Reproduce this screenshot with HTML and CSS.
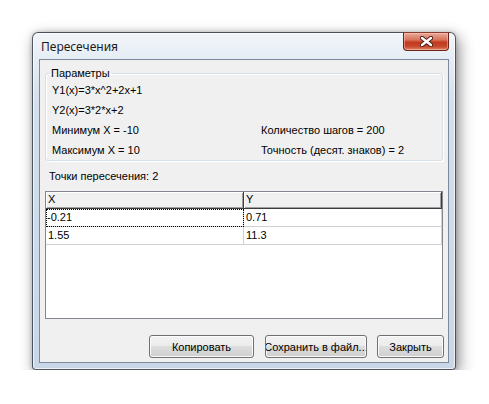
FILE: index.html
```html
<!DOCTYPE html>
<html lang="ru">
<head>
<meta charset="utf-8">
<title>Пересечения</title>
<link rel="stylesheet" href="styles.css">
</head>
<body>
<div class="stage">
  <div class="window">
    <div class="titlebar">
      <span class="title">Пересечения</span>
      <div class="close">
        <svg width="13" height="11" viewBox="0 0 13 11">
          <path d="M2 2 L11 9 M11 2 L2 9" stroke="#4a1a12" stroke-width="4.2" stroke-linecap="round" fill="none"/>
          <path d="M2 2 L11 9 M11 2 L2 9" stroke="#ffffff" stroke-width="2.4" stroke-linecap="round" fill="none"/>
        </svg>
      </div>
    </div>
    <div class="client">
      <fieldset class="params">
        <legend>Параметры</legend>
        <div class="pgrid">
          <span>Y1(x)=3*x^2+2x+1</span><span></span>
          <span>Y2(x)=3*2*x+2</span><span></span>
          <span>Минимум X = -10</span><span>Количество шагов = 200</span>
          <span>Максимум X = 10</span><span>Точность (десят. знаков) = 2</span>
        </div>
      </fieldset>
      <div class="count">Точки пересечения: 2</div>
      <div class="list">
        <div class="hdr">X</div>
        <div class="hdr">Y</div>
        <div class="cell focus">-0.21</div>
        <div class="cell">0.71</div>
        <div class="cell">1.55</div>
        <div class="cell">11.3</div>
      </div>
      <div class="buttons">
        <div class="btn btn-copy"><span>Копировать</span></div>
        <div class="btn btn-save"><span>Сохранить в файл...</span></div>
        <div class="btn btn-close"><span>Закрыть</span></div>
      </div>
    </div>
  </div>
</div>
</body>
</html>
```
FILE: styles.css
```css
html, body {
  margin: 0;
  padding: 0;
  background: #ffffff;
}
body {
  font-family: "Liberation Sans", Arial, sans-serif;
  font-size: 11px;
  color: #000;
}
.stage {
  padding: 32px 0 0 32px;
}
.window {
  box-sizing: border-box;
  width: 424px;
  height: 338px;
  border: 1px solid rgba(40, 48, 58, 0.8);
  border-radius: 6px 6px 4px 4px;
  background: linear-gradient(to bottom, #f3f6fa 0, #e6edf5 24px, #d3dfec 70px, #c8d6e7 100%);
  padding: 0 6px 6px 6px;
  display: flex;
  flex-direction: column;
  box-shadow: 3px 5px 15px rgba(0, 0, 0, 0.45), 0 0 5px rgba(0, 0, 0, 0.2), inset 0 0 0 1px rgba(255, 255, 255, 0.7);
}
.titlebar {
  height: 26px;
  display: flex;
  align-items: center;
  justify-content: space-between;
  padding-left: 2px;
}
.title {
  font-family: "Noto Sans", "Open Sans", sans-serif;
  font-size: 12px;
  color: #1a1a1a;
  margin-top: 1px;
}
.close {
  align-self: flex-start;
  margin-top: -1px;
  width: 46px;
  height: 19px;
  box-sizing: border-box;
  border: 1px solid #6b2418;
  border-top-color: #8a3a2c;
  border-radius: 0 0 4px 4px;
  background: linear-gradient(to bottom, #ebaa9c 0%, #d9735c 40%, #c2391f 55%, #c94a2e 80%, #e08a6a 100%);
  box-shadow: inset 0 0 0 1px rgba(255, 210, 200, 0.45);
  display: flex;
  align-items: center;
  justify-content: center;
}
.close svg {
  display: block;
}
.client {
  flex: 1;
  box-sizing: border-box;
  background: #f0f0f0;
  border: 1px solid #7c8a9c;
  padding: 7px 4px 4px 5px;
  display: flex;
  flex-direction: column;
}
.params {
  margin: 0 1px 0 0;
  padding: 0 6px;
  border: 1px solid #d5dfe5;
  border-radius: 3px;
  box-shadow: inset 1px 1px 0 #ffffff, 1px 1px 0 #ffffff;
  min-width: 0;
}
.params legend {
  padding: 0 2px;
  margin-left: -3px;
  line-height: 13px;
  font-size: 11px;
}
.pgrid {
  display: grid;
  grid-template-columns: 209px 1fr;
  grid-auto-rows: 20px;
  align-items: center;
}
.count {
  margin: 9px 0 0 4px;
  line-height: 13px;
}
.list {
  margin: 8px 1px 0 0;
  box-sizing: border-box;
  height: 128px;
  border: 1px solid #828790;
  background: #ffffff;
  display: grid;
  grid-template-columns: 198px 198px;
  grid-template-rows: 17px 18px 18px;
  align-content: start;
}
.hdr {
  box-sizing: border-box;
  background: #f0f0f0;
  padding-left: 2px;
  line-height: 15px;
  border-right: 1px solid #3c3c3c;
  border-bottom: 1px solid #3c3c3c;
  box-shadow: inset 1px 1px 0 #ffffff, inset -1px -1px 0 #a0a0a0;
}
.cell {
  box-sizing: border-box;
  padding-left: 2px;
  line-height: 17px;
  border-right: 1px solid #d0d0d0;
  border-bottom: 1px solid #d0d0d0;
}
.focus {
  padding-left: 1px;
  outline: 1px dotted #000;
  outline-offset: -1px;
}
.buttons {
  margin-top: auto;
  display: flex;
  justify-content: flex-end;
}
.btn {
  box-sizing: border-box;
  height: 23px;
  border: 1px solid #707070;
  border-radius: 3px;
  background: linear-gradient(to bottom, #f2f2f2 0%, #ebebeb 50%, #dddddd 50%, #cfcfcf 100%);
  box-shadow: inset 0 0 0 1px #fbfbfb;
  display: flex;
  align-items: center;
  justify-content: center;
  overflow: hidden;
  white-space: nowrap;
}
.btn span {
  flex: none;
}
.btn-copy {
  width: 105px;
}
.btn-save {
  width: 102px;
  margin-left: 11px;
}
.btn-close {
  width: 67px;
  margin-left: 10px;
}
```
